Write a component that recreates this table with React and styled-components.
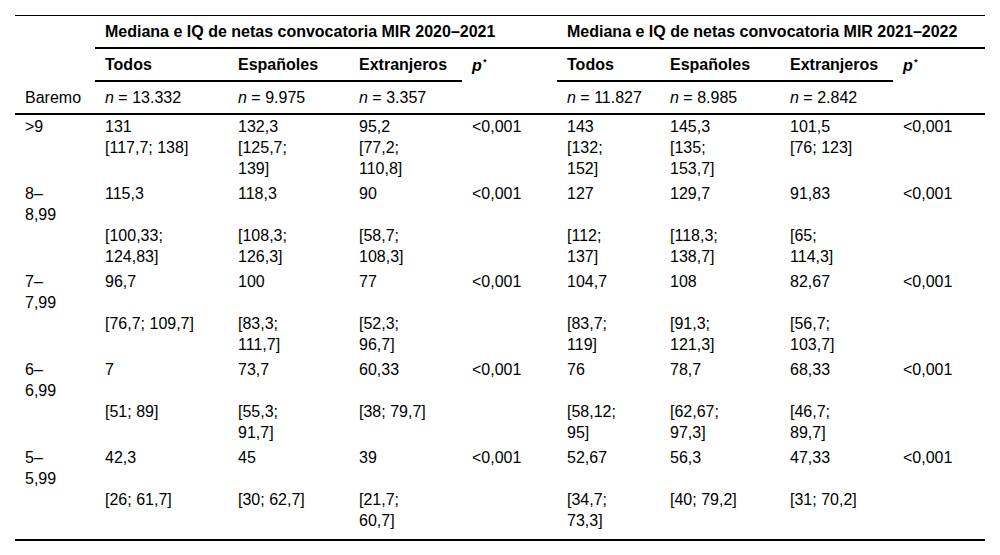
import React from "react";
import styled, { createGlobalStyle } from "styled-components";

const GlobalStyle = createGlobalStyle`
  body {
    margin: 0;
    background: #fff;
    color: #000;
    font-family: "Liberation Sans", Arial, sans-serif;
  }
`;

// ancho de cada columna y el relleno derecho que fuerza los mismos cortes de línea
const COLS = [
  { w: 80, pr: 30 },
  { w: 133, pr: 23 },
  { w: 121, pr: 38 },
  { w: 113, pr: 30 },
  { w: 95, pr: 10 },
  { w: 103, pr: 35 },
  { w: 120, pr: 37 },
  { w: 113, pr: 33 },
  { w: 92, pr: 10 },
];

const groups = [
  {
    title: "Mediana e IQ de netas convocatoria MIR 2020–2021",
    n: ["13.332", "9.975", "3.357"],
  },
  {
    title: "Mediana e IQ de netas convocatoria MIR 2021–2022",
    n: ["11.827", "8.985", "2.842"],
  },
];

const rows = [
  {
    b: ">9",
    v: [["131", "132,3", "95,2"], ["143", "145,3", "101,5"]],
    iq: [
      ["[117,7; 138]", "[125,7; 139]", "[77,2; 110,8]"],
      ["[132; 152]", "[135; 153,7]", "[76; 123]"],
    ],
  },
  {
    b: "8–8,99",
    v: [["115,3", "118,3", "90"], ["127", "129,7", "91,83"]],
    iq: [
      ["[100,33; 124,83]", "[108,3; 126,3]", "[58,7; 108,3]"],
      ["[112; 137]", "[118,3; 138,7]", "[65; 114,3]"],
    ],
  },
  {
    b: "7–7,99",
    v: [["96,7", "100", "77"], ["104,7", "108", "82,67"]],
    iq: [
      ["[76,7; 109,7]", "[83,3; 111,7]", "[52,3; 96,7]"],
      ["[83,7; 119]", "[91,3; 121,3]", "[56,7; 103,7]"],
    ],
  },
  {
    b: "6–6,99",
    v: [["7", "73,7", "60,33"], ["76", "78,7", "68,33"]],
    iq: [
      ["[51; 89]", "[55,3; 91,7]", "[38; 79,7]"],
      ["[58,12; 95]", "[62,67; 97,3]", "[46,7; 89,7]"],
    ],
  },
  {
    b: "5–5,99",
    v: [["42,3", "45", "39"], ["52,67", "56,3", "47,33"]],
    iq: [
      ["[26; 61,7]", "[30; 62,7]", "[21,7; 60,7]"],
      ["[34,7; 73,3]", "[40; 79,2]", "[31; 70,2]"],
    ],
  },
];

const Page = styled.div`
  padding: 15px;
`;

const Table = styled.table`
  width: 970px;
  table-layout: fixed;
  border-collapse: collapse;
  border-top: 1px solid #000;
  border-bottom: 2px solid #000;
  font-size: 16px;
  line-height: 21px;
`;

const Head = styled.thead`
  border-bottom: 2px solid #000;
`;

const Th = styled.th`
  padding: 5px ${({ $c }) => COLS[$c].pr}px 5px 10px;
  text-align: left;
  vertical-align: middle;
  font-weight: ${({ $light }) => ($light ? 400 : 700)};
  white-space: nowrap;
  border-bottom: ${({ $rule }) => ($rule ? "2px solid #000" : "none")};
`;

const Td = styled.td`
  padding: ${({ $iq, $c }) =>
    $iq ? `0 ${COLS[$c].pr}px 3px 10px` : `1px ${COLS[$c].pr}px 0 10px`};
  text-align: left;
  vertical-align: top;

  tr:last-child > & {
    padding-bottom: 8px;
  }
`;

const Ital = styled.i`
  font-style: italic;
`;

const PMark = styled.span`
  font-style: italic;
  font-weight: 700;

  sup {
    font-size: 9px;
    line-height: 0;
    vertical-align: 6px;
    margin-left: 1px;
  }
`;

const P = () => (
  <PMark>
    p<sup>*</sup>
  </PMark>
);

export default function App() {
  return (
    <Page>
      <GlobalStyle />
      <Table>
        <colgroup>
          {COLS.map((c, i) => (
            <col key={i} style={{ width: c.w }} />
          ))}
        </colgroup>
        <Head>
          <tr>
            <Th $c={0} />
            {groups.map((g, gi) => (
              <Th key={gi} $c={gi * 4 + 4} colSpan={4} $rule>
                {g.title}
              </Th>
            ))}
          </tr>
          <tr>
            <Th $c={0} />
            {groups.map((g, gi) => (
              <React.Fragment key={gi}>
                <Th $c={gi * 4 + 1} $rule>Todos</Th>
                <Th $c={gi * 4 + 2} $rule>Españoles</Th>
                <Th $c={gi * 4 + 3} $rule>Extranjeros</Th>
                <Th $c={gi * 4 + 4}>
                  <P />
                </Th>
              </React.Fragment>
            ))}
          </tr>
          <tr>
            <Th $c={0} $light>Baremo</Th>
            {groups.map((g, gi) => (
              <React.Fragment key={gi}>
                {g.n.map((n, ni) => (
                  <Th key={ni} $c={gi * 4 + ni + 1} $light>
                    <Ital>n</Ital> = {n}
                  </Th>
                ))}
                <Th $c={gi * 4 + 4} $light />
              </React.Fragment>
            ))}
          </tr>
        </Head>
        <tbody>
          {rows.map((r, ri) => (
            <React.Fragment key={ri}>
              <tr>
                <Td $c={0}>{r.b}</Td>
                {r.v.map((vals, gi) => (
                  <React.Fragment key={gi}>
                    {vals.map((v, vi) => (
                      <Td key={vi} $c={gi * 4 + vi + 1}>{v}</Td>
                    ))}
                    <Td $c={gi * 4 + 4}>&lt;0,001</Td>
                  </React.Fragment>
                ))}
              </tr>
              <tr>
                <Td $c={0} $iq />
                {r.iq.map((vals, gi) => (
                  <React.Fragment key={gi}>
                    {vals.map((v, vi) => (
                      <Td key={vi} $c={gi * 4 + vi + 1} $iq>{v}</Td>
                    ))}
                    <Td $c={gi * 4 + 4} $iq />
                  </React.Fragment>
                ))}
              </tr>
            </React.Fragment>
          ))}
        </tbody>
      </Table>
    </Page>
  );
}
